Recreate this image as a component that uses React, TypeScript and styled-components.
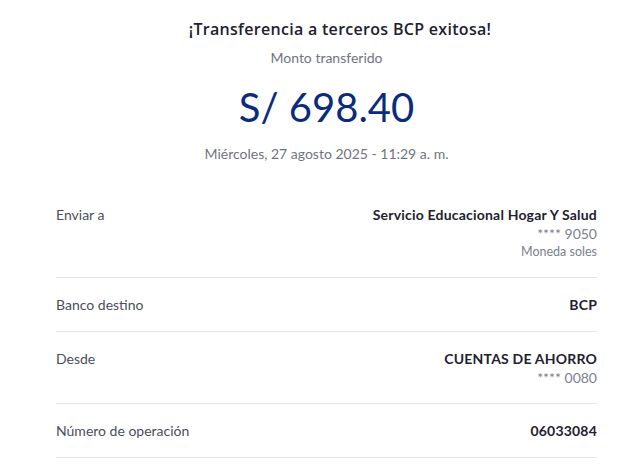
import React, { FC } from "react";
import styled, { createGlobalStyle } from "styled-components";

interface IDetail {
  label: string;
  value: string;
  extra?: string[];
}

const details: IDetail[] = [
  {
    label: "Enviar a",
    value: "Servicio Educacional Hogar Y Salud",
    extra: ["**** 9050", "Moneda soles"]
  },
  { label: "Banco destino", value: "BCP" },
  { label: "Desde", value: "CUENTAS DE AHORRO", extra: ["**** 0080"] },
  { label: "Número de operación", value: "06033084" }
];

const App: FC = () => {
  return (
    <>
      <GlobalStyle />
      <Receipt>
        <Header>
          <Title>¡Transferencia a terceros BCP exitosa!</Title>
          <AmountLabel>Monto transferido</AmountLabel>
          <Amount>S/ 698.40</Amount>
          <DateString>Miércoles, 27 agosto 2025 - 11:29 a. m.</DateString>
        </Header>
        <DetailList>
          {details.map(d => (
            <DetailRow key={d.label}>
              <Label>{d.label}</Label>
              <ValueColumn>
                <Value>{d.value}</Value>
                {d.extra &&
                  d.extra.map((e, i) => (
                    <SubValue key={e} small={i > 0}>
                      {e}
                    </SubValue>
                  ))}
              </ValueColumn>
            </DetailRow>
          ))}
        </DetailList>
      </Receipt>
    </>
  );
};

export default App;

const GlobalStyle = createGlobalStyle`
  body {
    margin: 0;
    background: #ffffff;
    font-family: "Lato", "Open Sans", sans-serif;
  }
`;

const Receipt = styled.div`
  width: 541px;
  margin-left: 56px;
  padding-top: 19px;
`;

const Header = styled.div`
  display: flex;
  flex-direction: column;
  align-items: center;
  margin-bottom: 24px;
`;

const Title = styled.div`
  font-family: "Open Sans", sans-serif;
  font-size: 16px;
  font-weight: 600;
  line-height: 20px;
  letter-spacing: 0.3px;
  color: #1d2130;
  padding-left: 27px;
`;

const AmountLabel = styled.div`
  margin-top: 9px;
  font-size: 14px;
  line-height: 20px;
  color: #707483;
`;

const Amount = styled.div`
  margin-top: 15px;
  font-size: 40px;
  line-height: 48px;
  color: #0c2c7a;
`;

const DateString = styled.div`
  margin-top: 13px;
  font-size: 14px;
  line-height: 20px;
  color: #707483;
`;

const DetailList = styled.div`
  display: flex;
  flex-direction: column;
`;

const DetailRow = styled.div`
  display: flex;
  justify-content: space-between;
  align-items: flex-start;
  padding: 16px 0;
  border-bottom: 1px solid #e4e5e9;
`;

const Label = styled.div`
  font-size: 14px;
  line-height: 21px;
  color: #4a4e5b;
`;

const ValueColumn = styled.div`
  display: flex;
  flex-direction: column;
  align-items: flex-end;
`;

const Value = styled.div`
  font-size: 14px;
  font-weight: 700;
  line-height: 21px;
  letter-spacing: 0.2px;
  color: #1d2130;
`;

const SubValue = styled.div<{ small?: boolean }>`
  font-size: ${p => (p.small ? "12.5px" : "14px")};
  line-height: 18px;
  color: #7c808c;
`;
